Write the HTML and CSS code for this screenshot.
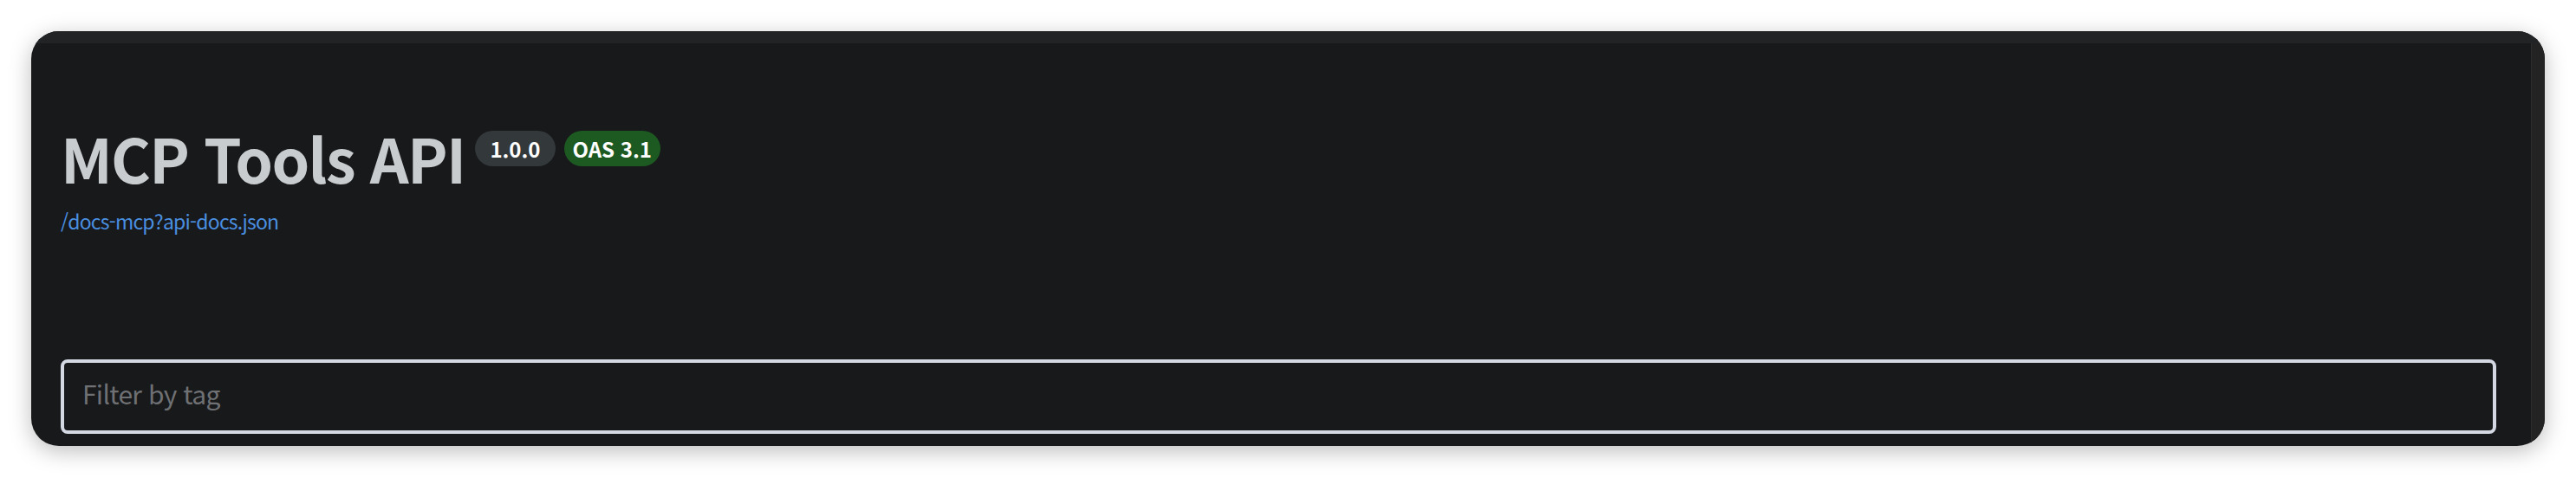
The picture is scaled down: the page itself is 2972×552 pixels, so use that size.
FILE: index.html
```html
<!DOCTYPE html>
<html lang="ko">
<head>
<meta charset="utf-8">
<title>MCP Tools API</title>
<link rel="stylesheet" href="styles.css">
</head>
<body>
<div class="window">
  <div class="titlebar"></div>
  <div class="viewport">
    <div class="content">
      <div class="info">
        <div class="title-row">
          <h2 class="title">MCP Tools API</h2>
          <span class="badge badge-version">1.0.0</span>
          <span class="badge badge-oas">OAS 3.1</span>
        </div>
        <a class="spec-link" href="#">/docs-mcp?api-docs.json</a>
      </div>
      <div class="filter">
        <input class="filter-input" type="text" placeholder="Filter by tag">
      </div>
    </div>
    <div class="scrollbar"></div>
  </div>
</div>
</body>
</html>
```
FILE: styles.css
```css
html, body {
  margin: 0;
  padding: 0;
  background: #ffffff;
}
body {
  padding: 36px 36px 37px 36px;
  font-family: "Noto Sans CJK KR", "Noto Sans", sans-serif;
}
.window {
  height: 479px;
  border-radius: 32px;
  overflow: hidden;
  background: #18191b;
  box-shadow: 0 6px 26px rgba(0, 0, 0, 0.26);
  display: flex;
  flex-direction: column;
}
.titlebar {
  height: 14px;
  flex: none;
  background: #222325;
}
.viewport {
  flex: 1;
  display: flex;
  min-height: 0;
}
.content {
  flex: 1;
  padding: 0 40px 0 34px;
  overflow: hidden;
}
.scrollbar {
  width: 15px;
  flex: none;
  background: #232323;
  border-left: 1px solid #2c2c2c;
}
.info {
  padding-top: 96px;
}
.title-row {
  display: flex;
  align-items: flex-start;
}
.title {
  margin: 0;
  font-size: 70px;
  line-height: 72px;
  font-weight: 700;
  color: #c9ccce;
  letter-spacing: -1.7px;
}
.badge {
  display: inline-block;
  height: 41px;
  line-height: 41px;
  margin-top: 5px;
  margin-left: 12px;
  border-radius: 21px;
  font-size: 24px;
  font-weight: 700;
  color: #ffffff;
}
.badge-version {
  padding: 0 17px;
  background: #33383a;
}
.badge-oas {
  margin-left: 10px;
  padding: 0 10px;
  background: #1d5a22;
}
.spec-link {
  display: block;
  margin-top: 21px;
  font-size: 23px;
  line-height: 32px;
  letter-spacing: -0.8px;
  color: #4a8fe0;
  text-decoration: none;
}
.filter {
  margin-top: 144px;
}
.filter-input {
  box-sizing: border-box;
  display: block;
  width: 100%;
  height: 86px;
  margin: 0;
  padding: 0 21px 8px;
  border: 4px solid #d3d8e2;
  border-radius: 8px;
  background: #18191b;
  font-family: "Noto Sans CJK KR", "Noto Sans", sans-serif;
  font-size: 30px;
  letter-spacing: -0.7px;
  color: #c9ccce;
  outline: none;
}
.filter-input::placeholder {
  color: #6e7073;
}
```
